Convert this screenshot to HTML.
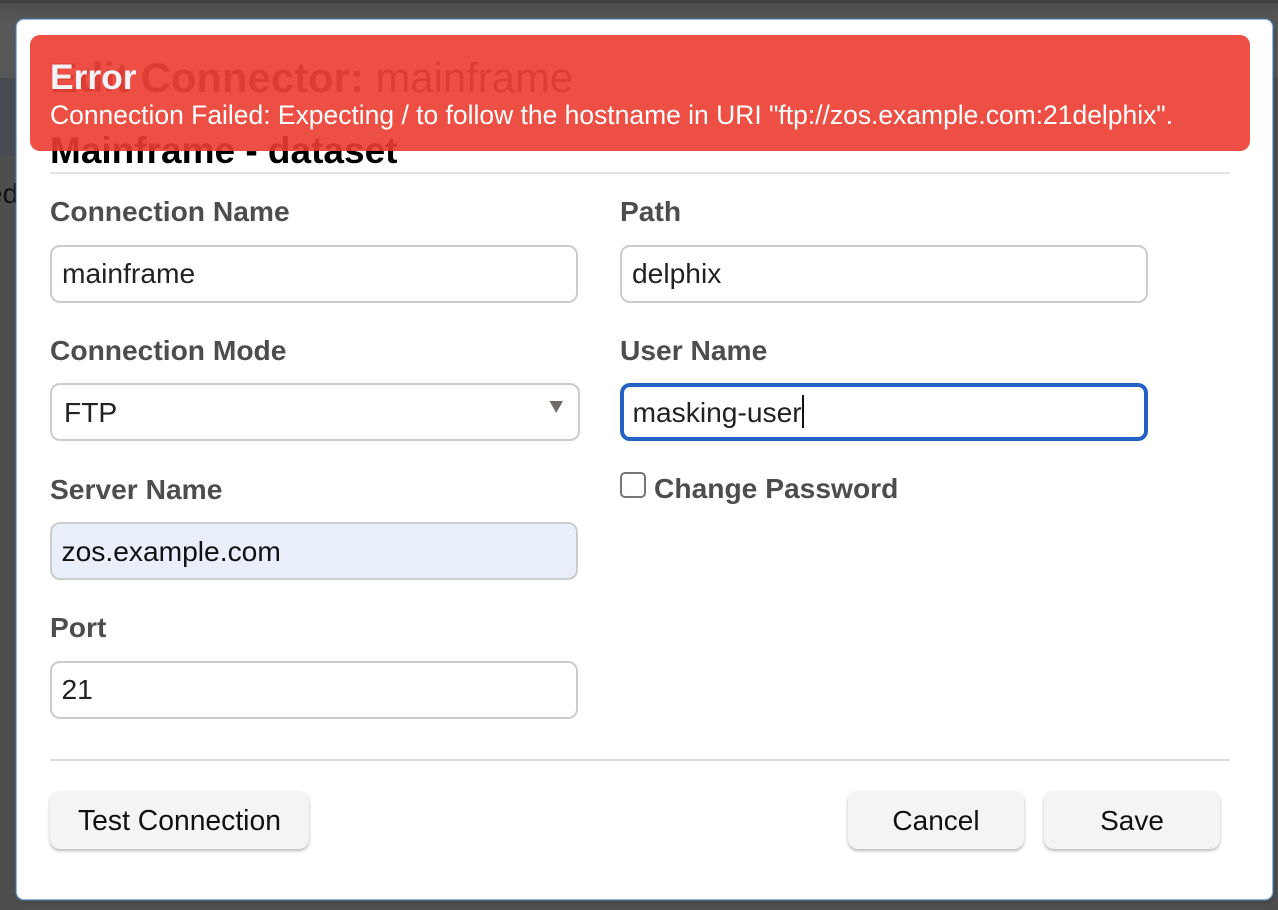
<!DOCTYPE html>
<html><head><meta charset="utf-8"><style>
html,body{margin:0;padding:0;width:1278px;height:910px;overflow:hidden;background:#4e4e4e;font-family:"Liberation Sans",Arial,sans-serif}
div,span{position:absolute;box-sizing:border-box;white-space:nowrap}
.lb{font-weight:bold;font-size:28.2px;line-height:32px;color:#4d4d4d}
.in{height:58px;border:2px solid #ccc;border-radius:10px;background:#fff;font-size:28.2px;line-height:52px;padding-left:10px;color:#222}
.bt{height:58px;top:791px;background:#f4f4f4;border-radius:10px;box-shadow:0 2px 3px rgba(0,0,0,.28);font-size:28.3px;line-height:58px;text-align:center;color:#111}
</style></head><body>
<div style="left:0;top:0;width:1278px;height:3px;background:#3f3f3f"></div>
<div style="left:0;top:3px;width:1278px;height:75px;background:linear-gradient(#4c4c4c,#585858 25%,#575757)"></div>
<div style="left:0;top:78px;width:16px;height:78px;background:#484b52"></div>
<div style="left:-13px;top:178px;font-size:28px;line-height:32px;color:#111">ed</div>
<div style="left:16px;top:19px;width:1257px;height:881px;background:#fff;border:1px solid #8fb8e6;border-radius:8px;box-shadow:0 0 2px #6a9fdc,1px 1px 5px rgba(0,0,0,.35)"></div>

<div style="left:50px;top:54px;font-size:41.85px;line-height:48px;color:#4d4d4d"><b>Edit Connector:</b> mainframe</div>
<div style="left:50px;top:129px;font-size:37px;line-height:44px;font-weight:bold;color:#000">Mainframe - dataset</div>
<div style="left:50px;top:172px;width:1180px;height:2px;background:#e4e4e4"></div>

<div style="left:30px;top:35px;width:1220px;height:116px;background:rgba(236,60,48,.9);border-radius:10px"></div>
<div style="left:50px;top:58px;font-size:35.4px;line-height:38px;font-weight:bold;color:#f1f3f8">Error</div>
<div style="left:50px;top:100px;font-size:26.46px;line-height:30px;color:#fff">Connection Failed: Expecting / to follow the hostname in URI "ftp://zos.example.com:21delphix".</div>

<div class="lb" style="left:50px;top:195px">Connection Name</div>
<div class="in" style="left:50px;top:245px;width:528px">mainframe</div>
<div class="lb" style="left:50px;top:334px">Connection Mode</div>
<div class="in" style="left:50px;top:383px;width:530px;padding-left:12px;line-height:54px">FTP</div>
<svg style="position:absolute;left:549px;top:400px" width="15" height="14"><path d="M0.5 1H14L7.2 13Z" fill="#6f6a66"/></svg>
<div class="lb" style="left:50px;top:473px">Server Name</div>
<div class="in" style="left:50px;top:522px;width:528px;background:#e8effb;color:#111;padding-left:9.5px;line-height:54px">zos.example.com</div>
<div class="lb" style="left:50px;top:611px">Port</div>
<div class="in" style="left:50px;top:661px;width:528px;padding-left:9.5px">21</div>

<div class="lb" style="left:620px;top:195px">Path</div>
<div class="in" style="left:620px;top:245px;width:528px">delphix</div>
<div class="lb" style="left:620px;top:334px">User Name</div>
<div class="in" style="left:620px;top:383px;width:528px;border:4px solid #2361c4;line-height:51px;padding-left:8.5px">masking-user</div>
<div style="left:802px;top:395px;width:2px;height:33px;background:#111"></div>
<div style="left:620px;top:472px;width:26px;height:26px;border:2px solid #767676;border-radius:5px;background:#fff"></div>
<div class="lb" style="left:654px;top:472px">Change Password</div>

<div style="left:50px;top:759px;width:1180px;height:2px;background:#dcdcdc"></div>
<div class="bt" style="left:50px;width:259px">Test Connection</div>
<div class="bt" style="left:848px;width:176px;font-size:28px;line-height:60px">Cancel</div>
<div class="bt" style="left:1044px;width:176px;font-size:28px;line-height:60px">Save</div>
</body></html>
